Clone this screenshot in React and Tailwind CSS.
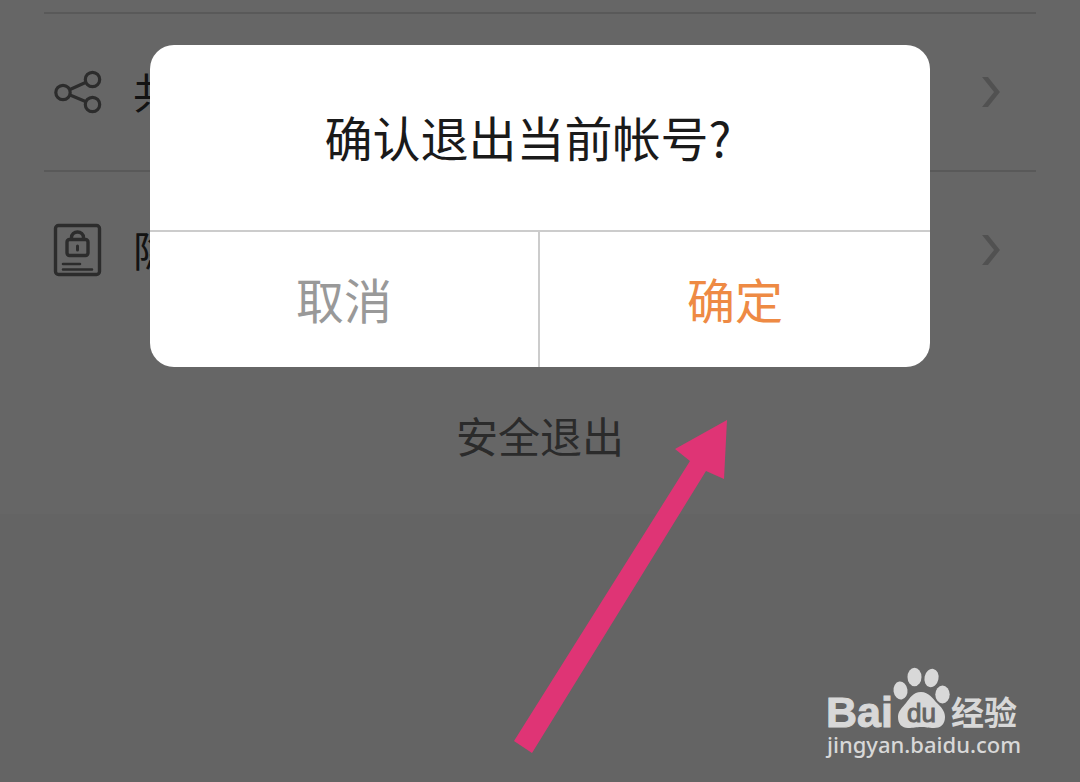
import React, { useState } from 'react';

const rows = [
  { id: 'share', label: '共享', Icon: ShareIcon },
  { id: 'privacy', label: '隐私', Icon: PrivacyIcon },
];

function ShareIcon() {
  return (
    <svg width="50" height="50" viewBox="0 0 50 50" fill="none" stroke="#6e6e6e" strokeWidth="3.2" className="shrink-0">
      <circle cx="10" cy="25.5" r="7.2" />
      <circle cx="39.5" cy="12.5" r="7.2" />
      <circle cx="39.5" cy="37.5" r="7.2" />
      <path d="M17 22.5 L32.5 15.5 M17 28 L32.5 34.5" />
    </svg>
  );
}

function PrivacyIcon() {
  return (
    <svg width="50" height="54" viewBox="0 0 50 54" fill="none" stroke="#6e6e6e" strokeWidth="3.4" strokeLinecap="round" className="shrink-0">
      <rect x="2.5" y="2.5" width="44" height="49" rx="3" />
      <rect x="14" y="16.5" width="21" height="16" rx="2.5" />
      <path d="M18.5 16 v-1.5 a6 5.5 0 0 1 12 0 V16" />
      <path d="M24.5 23 v4" strokeWidth="3" />
      <path d="M10 41 h17 M10 46.5 h29" strokeWidth="2.6" />
    </svg>
  );
}

function Chevron() {
  return (
    <svg width="18" height="32" viewBox="0 0 18 32" fill="#cbcbcb" className="shrink-0">
      <path d="M0 1 H6 L18 16 L6 31 H0 L12 16 Z" />
    </svg>
  );
}

function SettingRow({ label, Icon }) {
  return (
    <li className="mx-11 border-t-2 border-[#dedede]">
      <button className="flex w-full items-center pl-[9px] pr-9 h-[156px]">
        <Icon />
        <span className="ml-[30px] pb-0.5 text-[42px] leading-none text-[#303030]">{label}</span>
        <span className="ml-auto">
          <Chevron />
        </span>
      </button>
    </li>
  );
}

function ConfirmDialog({ onClose }) {
  return (
    <div className="absolute inset-0 bg-black/60 px-[150px] pt-[45px]">
      <div role="dialog" aria-labelledby="confirm-title" className="overflow-hidden rounded-3xl bg-white">
        <h2 id="confirm-title" className="pt-[55px] pb-[58px] pr-6 text-center text-5xl leading-[72px] font-normal text-[#1a1a1a]">
          确认退出当前帐号?
        </h2>
        <div className="grid grid-cols-2 border-t-2 border-[#cccccc]">
          <button onClick={onClose} className="border-r-2 border-[#cccccc] pt-[30px] pb-[33px] text-5xl leading-[72px] text-[#999999]">
            取消
          </button>
          <button onClick={onClose} className="pt-[30px] pb-[33px] text-5xl leading-[72px] text-[#ee8a44]">
            确定
          </button>
        </div>
      </div>
    </div>
  );
}

function Pointer() {
  return (
    <svg width="214" height="334" viewBox="514 420 214 334" className="pointer-events-none absolute top-[420px] left-[514px]">
      <path d="M727 420 L724 479 L706 471 L532 753 L514 741 L690 461 L675 449 Z" fill="#df3475" />
    </svg>
  );
}

function Watermark() {
  return (
    <div className="absolute right-[59px] bottom-[22px] text-[#d8d8d8]">
      <svg width="193" height="63" viewBox="828 666 193 63" fill="currentColor" className="block overflow-visible">
        <text x="827" y="727" fontFamily="Liberation Sans" fontWeight="700" fontSize="43" stroke="currentColor">Bai</text>
        <ellipse cx="901.5" cy="690.5" rx="7" ry="9" transform="rotate(-8 901.5 690.5)" />
        <ellipse cx="915.5" cy="677" rx="7" ry="9.3" />
        <ellipse cx="932.5" cy="678" rx="7" ry="9.3" transform="rotate(12 932.5 678)" />
        <ellipse cx="943.5" cy="694.5" rx="7.2" ry="9" />
        <path d="M922 692 C930 692 934 699 938 703 C942 707 946 711 946 717 C946 725 941 728 935 728 C929 728 927 727 922 727 C917 727 915 728 909 728 C903 728 899 724 899 717 C899 711 903 708 907 703 C911 698 914 692 922 692 Z" />
        <text x="908" y="722" fontFamily="Liberation Sans" fontSize="26" fill="#646464" stroke="#646464">du</text>
        <text x="952" y="725" fontFamily="Noto Sans CJK SC" fontWeight="700" fontSize="33">经验</text>
      </svg>
      <p className="font-['Noto_Sans',sans-serif] text-[22px] leading-[31px] font-medium whitespace-nowrap">jingyan.baidu.com</p>
    </div>
  );
}

export default function App() {
  const [open, setOpen] = useState(true);

  return (
    <main className="relative min-h-screen overflow-hidden bg-[#fafafa] font-['Noto_Sans_CJK_SC',sans-serif]">
      <ul className="bg-white pt-3 pb-7">
        {rows.map((row) => (
          <SettingRow key={row.id} label={row.label} Icon={row.Icon} />
        ))}
      </ul>
      <button onClick={() => setOpen(true)} className="block w-full bg-white py-[52px] text-[42px] leading-[54px] text-[#6b6b6b]">
        安全退出
      </button>
      {open && <ConfirmDialog onClose={() => setOpen(false)} />}
      <Pointer />
      <Watermark />
    </main>
  );
}
